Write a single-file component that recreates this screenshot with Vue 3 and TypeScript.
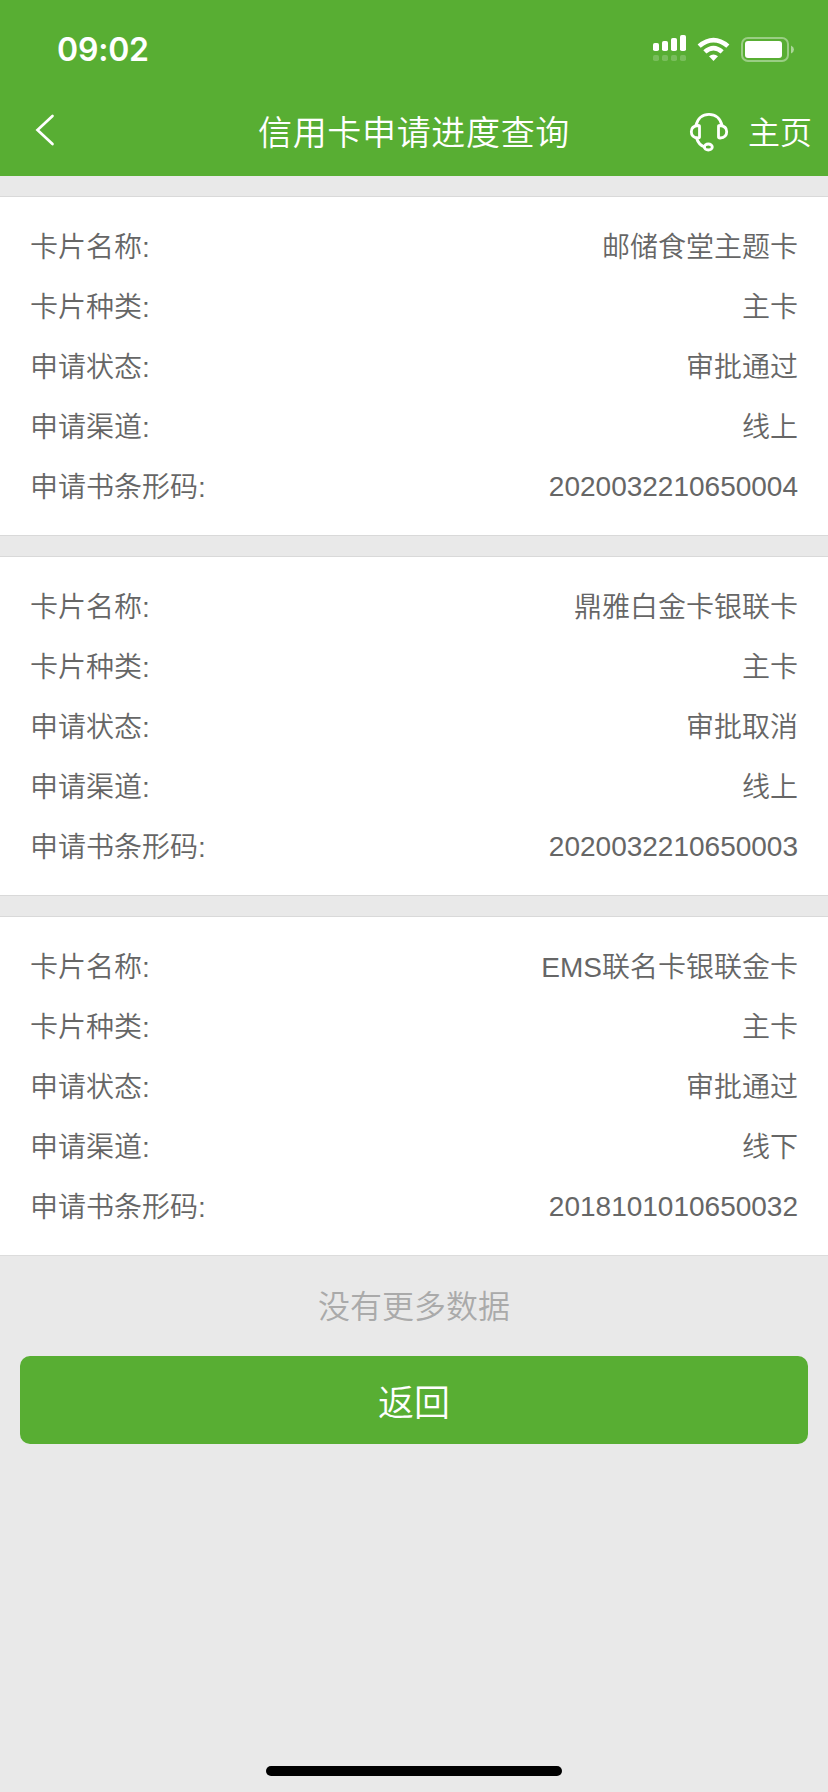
<script setup lang="ts">
interface Field {
  label: string
  value: string
}

interface Application {
  id: string
  fields: Field[]
}

function application(name: string, kind: string, status: string, channel: string, code: string): Application {
  return {
    id: code,
    fields: [
      { label: '卡片名称:', value: name },
      { label: '卡片种类:', value: kind },
      { label: '申请状态:', value: status },
      { label: '申请渠道:', value: channel },
      { label: '申请书条形码:', value: code },
    ],
  }
}

const applications: Application[] = [
  application('邮储食堂主题卡', '主卡', '审批通过', '线上', '2020032210650004'),
  application('鼎雅白金卡银联卡', '主卡', '审批取消', '线上', '2020032210650003'),
  application('EMS联名卡银联金卡', '主卡', '审批通过', '线下', '2018101010650032'),
]
</script>

<template>
  <div class="screen">
    <header class="header">
      <div class="status">
        <span class="time">09:02</span>
        <svg class="status-icons" width="144" height="32" viewBox="0 0 144 32" fill="#fff">
          <rect x="1" y="11" width="6" height="8" rx="1.8" />
          <rect x="10" y="9" width="6" height="10" rx="1.8" />
          <rect x="19" y="6" width="6" height="13" rx="1.8" />
          <rect x="28" y="3" width="6" height="16" rx="1.8" />
          <g opacity=".2">
            <rect x="1" y="23" width="6" height="6" rx="1.8" />
            <rect x="10" y="23" width="6" height="6" rx="1.8" />
            <rect x="19" y="23" width="6" height="6" rx="1.8" />
            <rect x="28" y="23" width="6" height="6" rx="1.8" />
          </g>
          <path d="M45.6 12.4Q61.5-1 77.4 12.4L74.3 15.8Q61.5 5 48.7 15.8Z" />
          <path d="M51.3 18.3Q61.5 9.3 71.7 18.3L68.6 21.5Q61.5 15.6 54.4 21.5Z" />
          <path d="M57 24.2Q61.5 20.6 66 24.2L61.5 29Z" />
          <rect x="90" y="6" width="46" height="23" rx="6" fill="none" stroke="#fff" stroke-width="2" opacity=".4" />
          <rect x="93" y="9" width="37" height="17" rx="3" />
          <path d="M139 13.5Q142 14.8 142 17.5T139 21.5Z" opacity=".5" />
        </svg>
      </div>
      <nav class="nav">
        <button class="back" aria-label="返回">
          <svg width="22" height="34" viewBox="0 0 22 34">
            <path d="M19.5 3L4.5 17L19.5 31" fill="none" stroke="#fff" stroke-width="2.7" stroke-linecap="round" />
          </svg>
        </button>
        <h1 class="title">信用卡申请进度查询</h1>
        <div class="actions">
          <svg
            width="40"
            height="40"
            viewBox="0 0 40 40"
            fill="none"
            stroke="#fff"
            stroke-width="2.8"
            stroke-linecap="round"
            stroke-linejoin="round"
          >
            <path d="M7 13.5C8.5 6.5 13.5 2.3 20 2.3S31.5 6.5 33 13.5" />
            <path d="M10.5 14.5Q10.5 13.5 9 13.5Q2.3 14 2.3 19.7T9 26Q10.5 26 10.5 25Z" />
            <path d="M29.5 14.5Q29.5 13.5 31 13.5Q37.7 14 37.7 19.7T31 26Q29.5 26 29.5 25Z" />
            <path d="M7.5 26C9 31 11.5 33.5 15.5 35" />
            <ellipse cx="19.3" cy="35" rx="4" ry="3" />
          </svg>
          <a class="home">主页</a>
        </div>
      </nav>
    </header>

    <main class="list">
      <section v-for="item in applications" :key="item.id" class="card">
        <div v-for="field in item.fields" :key="field.label" class="row">
          <span>{{ field.label }}</span>
          <span :class="{ code: field.value === item.id }">{{ field.value }}</span>
        </div>
      </section>
      <p class="end">没有更多数据</p>
      <button class="return">返回</button>
    </main>

    <div class="home-bar"></div>
  </div>
</template>

<style>
body {
  margin: 0;
  background: #e9e9e9;
}
</style>

<style scoped>
.screen {
  box-sizing: border-box;
  display: flex;
  flex-direction: column;
  width: 828px;
  height: 1792px;
  background: #e9e9e9;
  font-family: "Liberation Sans", "Noto Sans CJK SC", sans-serif;
  font-weight: 350;
  overflow: hidden;
}

.header {
  height: 176px;
  background: #58ae33;
  color: #fff;
}

.status {
  display: flex;
  justify-content: space-between;
  height: 88px;
  padding: 0 32px 0 57px;
}

.time {
  font: 600 32px/40px Inter, sans-serif;
  letter-spacing: -0.2px;
  padding-top: 30px;
}

.status-icons {
  margin-top: 32px;
}

.nav {
  display: grid;
  grid-template-columns: 200px 1fr 200px;
  align-items: center;
  height: 88px;
}

button {
  border: 0;
  padding: 0;
  font: inherit;
  color: inherit;
  background: none;
}

.back {
  display: flex;
  padding-left: 33px;
  margin-top: -4px;
}

.title {
  margin: 0;
  padding-top: 2px;
  font-size: 34px;
  font-weight: inherit;
  line-height: 86px;
  letter-spacing: 0.67px;
  text-align: center;
  white-space: nowrap;
}

.actions {
  display: flex;
  align-items: center;
  justify-content: flex-end;
  gap: 19px;
  padding-right: 16px;
}

.home {
  padding-top: 2px;
  font-size: 32px;
  line-height: 86px;
}

.list {
  flex: 1;
  padding-top: 20px;
}

.card {
  box-sizing: border-box;
  height: 340px;
  margin-bottom: 20px;
  padding: 19px 30px;
  border: solid #d9d9d9;
  border-width: 1px 0;
  background: #fff;
}

.row {
  display: flex;
  justify-content: space-between;
  height: 60px;
  font-size: 28px;
  line-height: 64px;
  color: #666;
}

.code {
  line-height: 61px;
}

.end {
  margin: 0;
  height: 100px;
  font-size: 32px;
  line-height: 103px;
  text-align: center;
  color: #aaa;
}

.card:last-of-type {
  margin-bottom: 0;
  border-bottom-color: #dcdcdc;
}

.return {
  display: block;
  box-sizing: border-box;
  width: 788px;
  height: 88px;
  margin: 0 20px;
  padding-top: 8px;
  border-radius: 10px;
  background: #58ae33;
  color: #fff;
  font-size: 36px;
  line-height: 80px;
  text-align: center;
}

.home-bar {
  width: 296px;
  height: 10px;
  margin: 0 auto 16px;
  border-radius: 5px;
  background: #000;
}
</style>
